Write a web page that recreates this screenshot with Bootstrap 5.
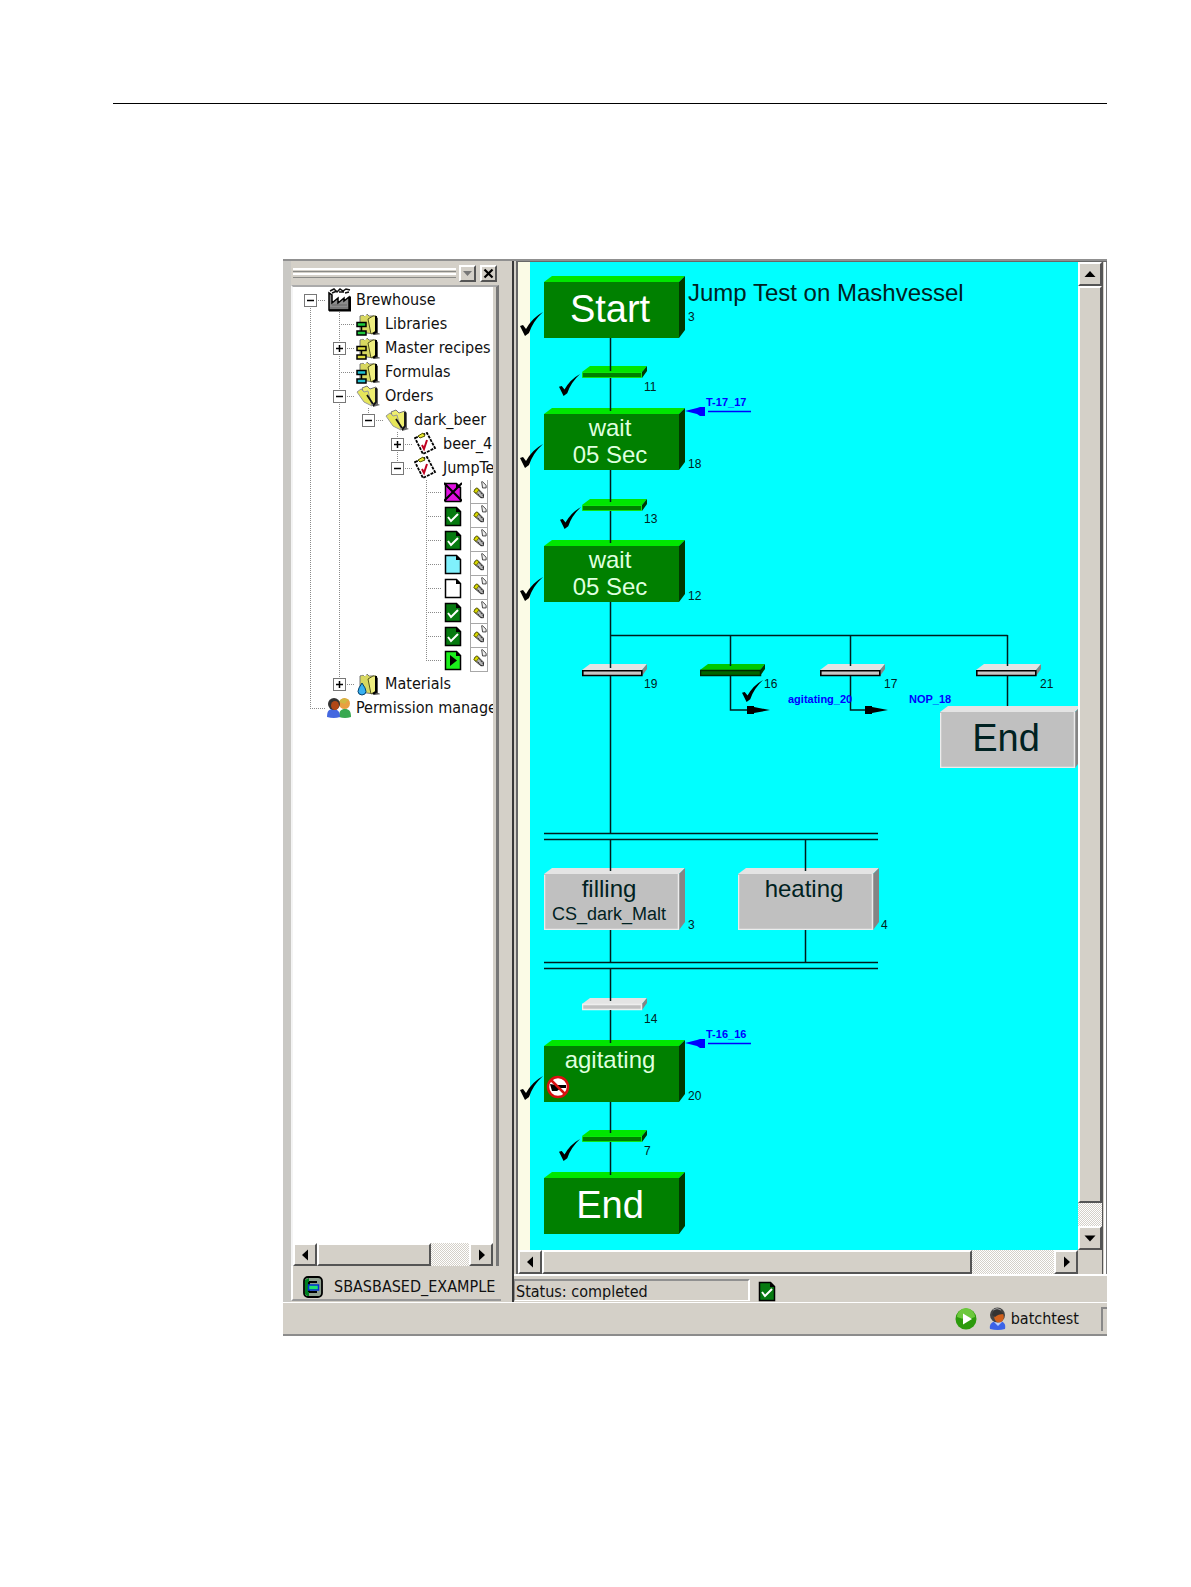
<!DOCTYPE html>
<html lang="en">
<head>
<meta charset="utf-8">
<meta name="viewport" content="width=device-width, initial-scale=1">
<title>Jump Test on Mashvessel</title>
<link rel="stylesheet" href="https://cdn.jsdelivr.net/npm/bootstrap@5.3.0/dist/css/bootstrap.min.css">
<script src="https://cdn.jsdelivr.net/npm/bootstrap@5.3.0/dist/js/bootstrap.bundle.min.js"></script>
<style>
:root{--face:#d4d0c8;--dots:#8a8a8a}
body{background:#fff;color:#111;font-family:"DejaVu Sans Condensed","DejaVu Sans",sans-serif;font-size:16px;line-height:24px}
.page{padding:103px 84px 0 113px}
.rule{border:0;border-top:1px solid #000;opacity:1;margin:0 0 155px}
.win{margin-left:170px;background:var(--face);border-top:2px solid #909090;border-bottom:2px solid #8c8c8c}
.dock{width:229px;padding:0 11px 0 8px;background:linear-gradient(90deg,#c9c8c4 8px,transparent 8px)}
.grip{height:10px;margin:0 3px 0 2px;background:linear-gradient(#fff 2px,var(--face) 2px 3px,#8a8a86 3px 4px,var(--face) 4px 5px,#fff 5px 7px,var(--face) 7px 9px,#8a8a86 9px)}
.cap{height:24px}
.bevel{background:var(--face);border:2px solid;border-color:#fff #555 #555 #fff;border-radius:0;padding:0;display:flex;align-items:center;justify-content:center;color:#000}
.cap .bevel{width:17px;height:17px}
.treebox{border:2px solid;border-color:#aaa #777 #777 #f4f4f4;border-right-width:3px;border-bottom:0;margin-right:2px;padding-right:3px}
.tree{background:#fff;height:956px;overflow:hidden;padding:1px 0 0 3px;margin:0;list-style:none}
.tree li{display:flex;height:24px;white-space:nowrap}
.tree li>span{line-height:24px}
.tc{flex:0 0 29px;display:flex;align-items:center;justify-content:center;
 --v:repeating-linear-gradient(var(--dots) 0 1px,#fff 1px 2px);--h:repeating-linear-gradient(90deg,var(--dots) 0 1px,#fff 1px 2px);background-repeat:no-repeat}
.tv{background-image:var(--v);background-size:1px 100%;background-position:14px 0}
.tt{background-image:var(--v),var(--h);background-size:1px 100%,15px 1px;background-position:14px 0,14px 12px}
.tl{background-image:var(--v),var(--h);background-size:1px 12px,15px 1px;background-position:14px 0,14px 12px}
.tr0{background-image:var(--v),var(--h);background-size:1px 12px,15px 1px;background-position:14px 12px,14px 12px}
.pm{width:13px;height:13px;border:1px solid #777;background:#fff;padding:0;display:flex;border-radius:0}
.pm svg{width:11px;height:11px}
.ico{width:24px;height:24px;flex:none;margin:0 5px 0 2px}
.docs .ico{width:18px;margin:0 8px 0 3px}
.docs .pen{width:18px;margin:0;border:solid #a8a8a8;border-width:0 1px 1px}
.picked{border-left:2px dotted #332;margin-left:5px}
.track{background:repeating-conic-gradient(#fff 0 25%,var(--face) 0 50%) 0 0/2px 2px}
.sb{height:24px}
.sb .bevel{width:24px;height:100%;flex:none}
.dock .sb{height:23px}
.vsb{width:24px}
.vsb .bevel{width:24px;height:24px;flex:none}
.vsb .thumb{height:917px}
.dock .thumb{width:114px!important}
.view .sb .thumb{width:430px!important}
.tab{height:35px;border-left:2px solid #fff;border-bottom:2px solid #999;padding:8px 0 0 10px;gap:11px}
.view{border-left:2px solid #383838;min-width:0}
.frame{border:solid #686868;border-width:1px 0 0 2px;margin-left:2px}
.edge{width:5px;background:linear-gradient(90deg,#555 1px,var(--face) 1px 2px,#fff 2px 4px,#777 4px)}
.chart{background:linear-gradient(90deg,#fbfbe6 12px,#0ff 12px);height:988px;overflow:hidden;min-width:0}
.chart svg{display:block}
.chart text{font-family:"Liberation Sans",Arial,sans-serif;font-size:24px;fill:#022}
.chart .num{font-size:12px}
.chart .mid{text-anchor:middle}
.chart .huge{font-size:38px}
.chart .midsize{font-size:18px}
.chart .lit{fill:#dfffdf}
.chart .huge.lit{fill:#fff}
.chart .jump{font-size:11px;font-weight:bold;fill:#00f}
.wire{stroke:#001c1c;stroke-width:1.5;fill:none}
.status{border-top:2px solid #fff;height:28px;padding-top:3px}
.field{width:236px;height:22px;border:solid;border-width:2px 2px 1px 1px;border-color:#909090 #fff #fff #909090;line-height:22px;padding-left:1px}
.foot{border-top:1px solid #fff;height:32px}
.foot .user{line-height:30px}
.slot{width:6px;height:24px;border:solid #888;border-width:2px 0 0 2px;margin-left:22px}
</style>
</head>
<body>
<svg width="0" height="0" class="d-block" aria-hidden="true">
<defs>
<symbol id="plus" viewBox="0 0 11 11"><path d="M2 5.500h7M5.500 2v7" stroke="#000" stroke-width="1.500"/></symbol>
<symbol id="minus" viewBox="0 0 11 11"><path d="M2 5.500h7" stroke="#000" stroke-width="1.500"/></symbol>
<symbol id="plant" viewBox="0 0 24 24"><path d="M2 22V5l3 2v8l6-5v5l6-5v3l5-4v13z" fill="#8c8c8c" stroke="#000" stroke-width="1.500"/><path d="M3 20h18M5 17h15" stroke="#666"/><path d="M3 3l4-2 3 3 3-3 3 2 3-2 4 1M5 5l5-2M12 4l5 0M18 5l4-1" stroke="#111" stroke-width="1.500" fill="none"/><path d="M2 22.500h21v-14" stroke="#000" stroke-width="2" fill="none"/></symbol>
<symbol id="book" viewBox="0 0 24 24"><path d="M19 4l3 2v15l3 1-7 1z" fill="#555"/><path d="M4 4l3-1 2 1 2-2 2 2h5v18L4 20z" fill="#d8d860" stroke="#777" stroke-width="1"/><path d="M12 7l5-3h3v15l-5 3z" fill="#eeee80" stroke="#55551a"/><path d="M20 4v16l-3 2" stroke="#000" stroke-width="2" fill="none"/><path d="M5 3l2-1 2 2 2-3 2 2 2-1" fill="none" stroke="#fff"/></symbol>
<symbol id="net" viewBox="0 0 24 24"><path d="M1 10.500h9v4H1zM1 19h9v4H1z" stroke="#000" stroke-width="1.500"/><path d="M5.500 14.500V19" stroke="#000" stroke-width="1.500"/></symbol>
<symbol id="folder" viewBox="0 0 24 24"><path d="M20 3l2 2v15l2 1-7 2z" fill="#666"/><path d="M6 4l5-2 3 3 6-2v15l-5 3-6-7z" fill="#eeee70" stroke="#777"/><path d="M1 8l4-3 3 3 4-1 4 15-8-4z" fill="#e6e65a" stroke="#999"/><path d="M20 4v14l-3 4M11 11l6 9" stroke="#111" stroke-width="1.800" fill="none"/></symbol>
<symbol id="clip" viewBox="0 0 24 24"><path d="M1 6l12-5 8 15-12 6z" fill="#fff" stroke="#000" stroke-width="1.800" stroke-dasharray="3 1"/><path d="M4 4l5-3 2 3-5 2z" fill="#e8e830" stroke="#550"/><path d="M8 13l2 4 3-9" fill="none" stroke="#c00020" stroke-width="2"/></symbol>
<symbol id="doc" viewBox="0 0 18 24"><path d="M1.500 3.500h11l4 4v14h-15z" stroke="#000" stroke-width="1.500"/><path d="M12 3v5h5z" fill="#000"/></symbol>
<symbol id="done" viewBox="0 0 18 24"><use href="#doc" fill="#067a10"/><path d="M4 13l3 4 7-7" fill="none" stroke="#fff" stroke-width="2"/></symbol>
<symbol id="pencil" viewBox="0 0 18 24"><path d="M12 1h1l4 4v3h-4z" fill="#eee" stroke="#333"/><path d="M4 10l3-2 7 7 0 4-3 0-7-6z" fill="#b4b4b4" stroke="#222"/><path d="M8 10l6 7M6 13l6 6" stroke="#111" stroke-dasharray="1.500 1"/><path d="M3 12l3-4 3 2-3 4z" fill="#d8d800" stroke="#660"/></symbol>
<symbol id="person" viewBox="0 0 18 24"><path d="M1 22c-1-5 2-8 8-8s8 3 7 8q-7 2-15 0z" fill="#3b62e8"/><path d="M5 15l4 4 4-4z" fill="#b9d0ff"/><circle cx="8.500" cy="8" r="7.500" fill="#444"/><ellipse cx="10" cy="10" rx="4.800" ry="5.500" fill="#d0601c"/><path d="M3 8q1-6 7-5l5 4q-6 0-9 3z" fill="#333"/><path d="M4 3q4-3 8 0" stroke="#999" fill="none"/></symbol>
<symbol id="al" viewBox="0 0 20 20"><path d="M13 4.500v11L7 10z" fill="#000"/></symbol>
<symbol id="ar" viewBox="0 0 20 20"><path d="M8 4.500v11l6-5.500z" fill="#000"/></symbol>
<symbol id="au" viewBox="0 0 20 20"><path d="M4.500 13h11L10 7z" fill="#000"/></symbol>
<symbol id="ad" viewBox="0 0 20 20"><path d="M4.500 7.500h11L10 13.500z" fill="#000"/></symbol>
<symbol id="boxg" viewBox="0 0 141 62"><path d="M0 6h135v56H0z" fill="#008000"/><path d="M0 6l8-6h133l-6 6z" fill="#00e600"/><path d="M135 6l6-6v54l-6 8z" fill="#003800"/></symbol>
<symbol id="boxs" viewBox="0 0 141 62"><path d="M0 6h135v56H0z" fill="#c0c0c0"/><path d="M0 6l8-6h133l-6 6z" fill="#e4e4e4"/><path d="M135 6l6-6v54l-6 8z" fill="#858585"/><path d="M.5 7v54.500h134V6" fill="none" stroke="#ececec" stroke-width="1.500"/></symbol>
<symbol id="barg" viewBox="0 0 66 13"><path d="M0 6l8-6h57l-5 6z" fill="#00e600"/><path d="M60 6l5-6v5l-5 7z" fill="#003800"/><path d="M.5 6.500h59v5H.5z" fill="#008000" stroke="#0ce60c"/></symbol>
<symbol id="bark" viewBox="0 0 66 13"><path d="M0 6l8-6h57l-5 6z" fill="#00c800"/><path d="M60 6l5-6v5l-5 7z" fill="#003800"/><path d="M.5 6.500h60v5H.5z" fill="#006400" stroke="#002800" stroke-width="1.500"/></symbol>
<symbol id="bars" viewBox="0 0 66 13"><path d="M0 6l8-6h57l-5 6z" fill="#e4e4e4"/><path d="M60 6l5-6v5l-5 7z" fill="#858585"/><path d="M.8 6.800h59v4.700H.8z" fill="#c8c8c8" stroke="#000" stroke-width="1.600"/></symbol>
<symbol id="barw" viewBox="0 0 66 13"><path d="M0 6l8-6h57l-5 6z" fill="#e4e4e4"/><path d="M60 6l5-6v5l-5 7z" fill="#858585"/><path d="M.5 6.500h59v5H.5z" fill="#c0c0c0" stroke="#eee" stroke-width="1.500"/></symbol>
<symbol id="tick" viewBox="0 0 24 24"><path d="M0 14l3-1 3 4Q12 6 23 0 13 9 9 21l-4 3z" fill="#000"/></symbol>
<symbol id="inj" viewBox="0 0 68 12"><path d="M0 6l12-3 3-1h5v9h-5l-3-2z" fill="#00f"/><path d="M23 6.500h43" stroke="#00f" stroke-width="1.500"/></symbol>
<symbol id="outj" viewBox="0 0 24 10"><path d="M0 1h7v1l16 3-16 3v1H0z" fill="#000"/></symbol>
</defs>
</svg>

<main class="page">
<hr class="rule">
<div class="win">
 <div class="d-flex">
  <section class="dock flex-shrink-0 d-flex flex-column">
   <div class="cap d-flex align-items-center">
    <div class="grip flex-grow-1"></div>
    <div class="d-flex gap-1 pe-1">
     <button class="bevel" aria-label="Menu"><svg width="11" height="11"><path d="M1 3h9L5.500 8z" fill="#777"/></svg></button>
     <button class="bevel" aria-label="Close"><svg width="11" height="11"><path d="M1.500 1.500l8 8m0-8l-8 8" stroke="#000" stroke-width="2.200"/></svg></button>
    </div>
   </div>
   <div class="treebox">
    <ul class="tree">
     <li><i class="tc tr0"><button class="pm" aria-label="Collapse"><svg><use href="#minus"/></svg></button></i><svg class="ico"><use href="#plant"/></svg><span>Brewhouse</span></li>
     <li><i class="tc tv"></i><i class="tc tt"></i><svg class="ico"><use href="#book"/><use href="#net" fill="#1ec83c"/></svg><span>Libraries</span></li>
     <li><i class="tc tv"></i><i class="tc tt"><button class="pm" aria-label="Expand"><svg><use href="#plus"/></svg></button></i><svg class="ico"><use href="#book"/><use href="#net" fill="#e0e040"/></svg><span>Master recipes</span></li>
     <li><i class="tc tv"></i><i class="tc tt"></i><svg class="ico"><use href="#book"/><use href="#net" fill="#20c0d0"/></svg><span>Formulas</span></li>
     <li><i class="tc tv"></i><i class="tc tt"><button class="pm" aria-label="Collapse"><svg><use href="#minus"/></svg></button></i><svg class="ico"><use href="#folder"/></svg><span>Orders</span></li>
     <li><i class="tc tv"></i><i class="tc tv"></i><i class="tc tl"><button class="pm" aria-label="Collapse"><svg><use href="#minus"/></svg></button></i><svg class="ico"><use href="#folder"/></svg><span>dark_beer</span></li>
     <li><i class="tc tv"></i><i class="tc tv"></i><i class="tc"></i><i class="tc tt"><button class="pm" aria-label="Expand"><svg><use href="#plus"/></svg></button></i><svg class="ico"><use href="#clip"/></svg><span>beer_4</span></li>
     <li><i class="tc tv"></i><i class="tc tv"></i><i class="tc"></i><i class="tc tl"><button class="pm" aria-label="Collapse"><svg><use href="#minus"/></svg></button></i><svg class="ico"><use href="#clip"/></svg><span>JumpTe</span></li>
     <li class="docs"><i class="tc tv"></i><i class="tc tv"></i><i class="tc"></i><i class="tc"></i><i class="tc tt"></i><svg class="ico"><use href="#doc" fill="#e010e0"/><path d="M0 3l18 18M18 3L0 21" stroke="#000" stroke-width="2"/></svg><svg class="ico pen"><use href="#pencil"/></svg></li>
     <li class="docs"><i class="tc tv"></i><i class="tc tv"></i><i class="tc"></i><i class="tc"></i><i class="tc tt"></i><svg class="ico"><use href="#done"/></svg><svg class="ico pen"><use href="#pencil"/></svg></li>
     <li class="docs"><i class="tc tv"></i><i class="tc tv"></i><i class="tc"></i><i class="tc"></i><i class="tc tt"></i><svg class="ico"><use href="#done"/></svg><svg class="ico pen"><use href="#pencil"/></svg></li>
     <li class="docs"><i class="tc tv"></i><i class="tc tv"></i><i class="tc"></i><i class="tc"></i><i class="tc tt"></i><svg class="ico"><use href="#doc" fill="#80f0fc"/></svg><svg class="ico pen"><use href="#pencil"/></svg></li>
     <li class="docs"><i class="tc tv"></i><i class="tc tv"></i><i class="tc"></i><i class="tc"></i><i class="tc tt"></i><svg class="ico"><use href="#doc" fill="#fff"/></svg><svg class="ico pen"><use href="#pencil"/></svg></li>
     <li class="docs"><i class="tc tv"></i><i class="tc tv"></i><i class="tc"></i><i class="tc"></i><i class="tc tt"></i><svg class="ico"><use href="#done"/></svg><svg class="ico pen"><use href="#pencil"/></svg></li>
     <li class="docs"><i class="tc tv"></i><i class="tc tv"></i><i class="tc"></i><i class="tc"></i><i class="tc tt"></i><svg class="ico"><use href="#done"/></svg><svg class="ico pen"><use href="#pencil"/></svg></li>
     <li class="docs"><i class="tc tv"></i><i class="tc tv"></i><i class="tc"></i><i class="tc"></i><i class="tc tl"></i><svg class="ico"><use href="#doc" fill="#1cf01c"/><path d="M6 7v11l7-5.500z" fill="#000"/></svg><svg class="ico pen"><use href="#pencil"/></svg><b class="picked"></b></li>
     <li><i class="tc tv"></i><i class="tc tl"><button class="pm" aria-label="Expand"><svg><use href="#plus"/></svg></button></i><svg class="ico"><use href="#book"/><path d="M6 11q-8 11 0 12 8-1 0-12z" fill="#38b0f0" stroke="#03406e"/></svg><span>Materials</span></li>
     <li><i class="tc tl"></i><svg class="ico" viewBox="0 0 24 24"><path d="M12 21c0-6 2-8 6-8s6 2 6 8q-6 2-12 0z" fill="#38a850"/><circle cx="17.500" cy="7.500" r="5.500" fill="#e8a040"/><path d="M12 6q3-6 10-2-3 1-4 4z" fill="#d0b840"/><path d="M0 21c0-6 2-8 6-8s7 2 7 8q-6 2-13 0z" fill="#4468e0"/><circle cx="7" cy="8" r="6" fill="#333"/><ellipse cx="8" cy="9.500" rx="4" ry="4.500" fill="#b04818"/></svg><span>Permission manage</span></li>
    </ul>
    <div class="sb d-flex">
     <button class="bevel" aria-label="Scroll left"><svg width="20" height="20"><use href="#al"/></svg></button>
     <div class="bevel thumb"></div><div class="track flex-grow-1"></div>
     <button class="bevel" aria-label="Scroll right"><svg width="20" height="20"><use href="#ar"/></svg></button>
    </div>
   </div>
   <div class="tab d-flex align-items-center text-nowrap">
    <svg width="20" height="22" viewBox="0 0 20 22"><rect x="1" y="1" width="18" height="20" rx="4" fill="#8fa090" stroke="#000" stroke-width="1.800"/><path d="M2 4l4-2v18H4l-2-2z" fill="#008020"/><path d="M6 6h8M6 16h8M6 6v10" stroke="#000" stroke-width="2" fill="none"/><rect x="5.500" y="9" width="10" height="5" fill="#20e070" stroke="#0030d0" stroke-width="1.500"/></svg>
    <span>SBASBASED_EXAMPLE</span>
   </div>
  </section>

  <section class="view flex-grow-1 d-flex flex-column">
   <div class="frame d-flex">
    <div class="flex-grow-1 d-flex flex-column" style="min-width:0">
     <div class="chart">
      <svg width="560" height="988" role="img" aria-label="Recipe chart">
       <use href="#boxg" x="26" y="14" width="141" height="62"/>
       <use href="#boxg" x="26" y="146" width="141" height="62"/>
       <use href="#boxg" x="26" y="278" width="141" height="62"/>
       <use href="#boxs" x="422" y="444" width="141" height="62"/>
       <use href="#boxs" x="26" y="606" width="141" height="62"/>
       <use href="#boxs" x="220" y="606" width="141" height="62"/>
       <use href="#boxg" x="26" y="778" width="141" height="62"/>
       <use href="#boxg" x="26" y="910" width="141" height="62"/>
       <use href="#barg" x="64" y="104" width="66" height="13"/>
       <use href="#barg" x="64" y="237" width="66" height="13"/>
       <use href="#bars" x="64" y="402" width="66" height="13"/>
       <use href="#bark" x="182" y="402" width="66" height="13"/>
       <use href="#bars" x="302" y="402" width="66" height="13"/>
       <use href="#bars" x="458" y="402" width="66" height="13"/>
       <use href="#barw" x="64" y="736" width="66" height="13"/>
       <use href="#barg" x="64" y="868" width="66" height="13"/>
       <path class="wire" d="M92.500 76v33M92.500 116v33M92.500 208v32M92.500 249v32M92.500 340v66M92.500 414v157M92.500 373.500h397M212.500 373v31M332.500 373v31M489.500 373v31M212.500 414v34h17M332.500 414v34h17M489.500 414v30M26 571.500h334M26 577.500h334M92.500 577v32M287.500 577v32M92.500 668v33M287.500 668v33M26 700.500h334M26 706.500h334M92.500 707v32M92.500 748v33M92.500 840v31M92.500 880v33"/>
       <use href="#outj" x="229" y="443" width="24" height="10"/>
       <use href="#outj" x="347" y="443" width="24" height="10"/>
       <use href="#inj" x="167" y="143" width="68" height="12"/>
       <use href="#inj" x="167" y="775" width="68" height="12"/>
       <use href="#tick" x="2" y="50" width="24" height="24"/>
       <use href="#tick" x="2" y="182" width="24" height="24"/>
       <use href="#tick" x="2" y="315" width="24" height="24"/>
       <use href="#tick" x="2" y="814" width="24" height="24"/>
       <use href="#tick" x="41" y="112" width="22" height="22"/>
       <use href="#tick" x="42" y="245" width="22" height="22"/>
       <use href="#tick" x="224" y="418" width="22" height="22"/>
       <use href="#tick" x="41" y="877" width="22" height="22"/>
       <g transform="translate(40 825)"><circle r="10" fill="#fff" stroke="#d81010" stroke-width="2.500"/><path d="M-8-3l6 1h10v3l-5 0-4 3h-5z" fill="#000"/><path d="M-7-7L7 7" stroke="#d81010" stroke-width="2.500"/></g>
       <text x="170" y="39">Jump Test on Mashvessel</text>
       <text x="92" y="60" class="mid huge lit">Start</text>
       <text x="92" y="174" class="mid lit">wait</text><text x="92" y="201" class="mid lit">05 Sec</text>
       <text x="92" y="306" class="mid lit">wait</text><text x="92" y="333" class="mid lit">05 Sec</text>
       <text x="488" y="489" class="mid huge">End</text>
       <text x="91" y="635" class="mid">filling</text><text x="91" y="658" class="mid midsize">CS_dark_Malt</text>
       <text x="286" y="635" class="mid">heating</text>
       <text x="92" y="806" class="mid lit">agitating</text>
       <text x="92" y="956" class="mid huge lit">End</text>
       <text x="170" y="59" class="num">3</text><text x="170" y="206" class="num">18</text><text x="170" y="338" class="num">12</text>
       <text x="170" y="667" class="num">3</text><text x="363" y="667" class="num">4</text><text x="170" y="838" class="num">20</text>
       <text x="126" y="129" class="num">11</text><text x="126" y="261" class="num">13</text><text x="126" y="426" class="num">19</text><text x="246" y="426" class="num">16</text><text x="366" y="426" class="num">17</text><text x="522" y="426" class="num">21</text><text x="126" y="761" class="num">14</text><text x="126" y="893" class="num">7</text>
       <text x="188" y="144" class="jump">T-17_17</text><text x="188" y="776" class="jump">T-16_16</text>
       <text x="270" y="441" class="jump">agitating_20</text><text x="391" y="441" class="jump">NOP_18</text>
      </svg>
     </div>
     <div class="sb d-flex">
      <button class="bevel" aria-label="Scroll left"><svg width="20" height="20"><use href="#al"/></svg></button>
      <div class="bevel thumb"></div><div class="track flex-grow-1"></div>
      <button class="bevel" aria-label="Scroll right"><svg width="20" height="20"><use href="#ar"/></svg></button>
     </div>
    </div>
    <div class="vsb d-flex flex-column pb-4">
     <button class="bevel" aria-label="Scroll up"><svg width="20" height="20"><use href="#au"/></svg></button>
     <div class="bevel thumb"></div><div class="track flex-grow-1"></div>
     <button class="bevel" aria-label="Scroll down"><svg width="20" height="20"><use href="#ad"/></svg></button>
    </div>
    <div class="edge"></div>
   </div>
   <div class="status d-flex gap-2">
    <div class="field">Status: completed</div>
    <svg width="18" height="24"><use href="#done"/></svg>
   </div>
  </section>
 </div>
 <footer class="foot d-flex align-items-center justify-content-end">
  <svg width="22" height="22" class="me-2"><circle cx="11" cy="11" r="10.500" fill="#2c9a0c"/><path d="M2 9a9 9 0 0 1 18 0q-9 4-18 0z" fill="#6cc83c"/><path d="M8 5.500v11l9-5.500z" fill="#fff"/></svg>
  <svg width="18" height="24" class="ms-1 me-1"><use href="#person"/></svg>
  <span class="user">batchtest</span><div class="slot"></div>
 </footer>
</div>
</main>
</body>
</html>
